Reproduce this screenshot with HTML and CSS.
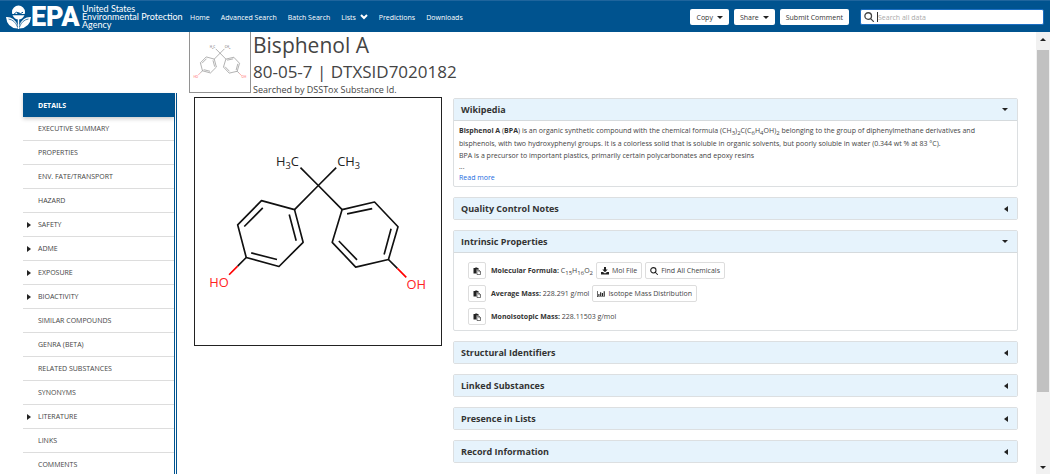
FILE: index.html
```html
<!DOCTYPE html>
<html lang="en">
<head>
<meta charset="utf-8">
<title>Bisphenol A - Chemical Details</title>
<link rel="stylesheet" href="styles.css">
</head>
<body>
<svg class="defs" aria-hidden="true">
  <symbol id="bonds" viewBox="12 7 744 744">
    <g class="bonds">
      <path d="M385 270 331 216M385 270 439 216M385 270 313 343M385 270 457 343"/>
      <path d="M313 343 213 316 141 389 167 488 266 515 339 442ZM217 338 161 394M297 358 318 437M182 474 260 494"/>
      <path d="M457 343 555 320 626 395 597 494 498 517 427 442ZM472 356 548 340M605 401 584 479M447 438 502 495"/>
      <path d="M167 488 141 514M597 494 624 521"/>
      <path class="oxygen" d="M141 514 115 540M624 521 651 548"/>
    </g>
  </symbol>
  <symbol id="copy" viewBox="0 0 16 16">
    <path d="M1 2h3l1-1h3l1 1h2v3H7v8H1z"/>
    <path d="M8 6h4l3 3v6H8z" fill="#fff" stroke="currentColor" stroke-width="1.2"/><path d="M11.5 6v3.500H15" fill="none" stroke="currentColor"/>
  </symbol>
  <symbol id="search" viewBox="0 0 16 16">
    <path d="M11 11l4 4M12 6.500a5.300 5.300 0 1 1-10.600 0a5.300 5.300 0 0 1 10.600 0z" fill="none" stroke="currentColor" stroke-width="2.100" stroke-linecap="round"/>
  </symbol>
  <symbol id="download" viewBox="0 0 16 16">
    <path d="M6 0h4v5h3.500L8 10.500 2.500 5H6zM0 10h4l4 3 4-3h4v5H0z"/>
  </symbol>
  <symbol id="chart" viewBox="0 0 18 16">
    <path d="M0 1h1.500v12.500H18V15H0zM3 8h2.500v4.500H3zM7 4h2.500v8.500H7zM11 6h2.500v6.500H11zM15 2h2.500v10.500H15z"/>
  </symbol>
</svg>

<header class="topbar">
  <a class="brand" href="#" aria-label="EPA home">
    <svg class="flower" viewBox="0 0 25 24" aria-hidden="true">
      <path d="M6 7A6.500 6.500 0 0 1 19 7Q19 8 18.700 9H14.500L12.500 7.500 10.500 9H6.300Q6 8 6 7Z" fill="#fff"/>
      <path d="M6.500 10.300H18.500Q16.500 14.500 12.500 14.500T6.500 10.300Z" fill="#fff"/>
      <path d="M8 9.200Q10.500 6 12.500 7.800T17 7.200" fill="none" stroke="#00538f" stroke-width="1"/>
      <path d="M0 12Q8 11.500 11.500 20V23.500Q1 23 0 12ZM25 12Q17 11.500 13.500 20V23.500Q24 23 25 12Z" fill="#fff"/>
      <path d="M12.500 14V24" stroke="#fff" stroke-width="1.400"/>
      <path d="M2.500 14Q9 15 11.500 22M22.500 14Q16 15 13.500 22" fill="none" stroke="#00538f" stroke-width=".7"/>
    </svg>
    <span class="epa">EPA</span>
    <span class="agency">United States<br>Environmental Protection<br>Agency</span>
  </a>
  <nav class="mainnav">
    <a href="#">Home</a>
    <a href="#">Advanced Search</a>
    <a href="#">Batch Search</a>
    <a href="#">Lists <svg class="chevron" viewBox="0 0 8 6" aria-hidden="true"><path d="M1 1l3 3 3-3"/></svg></a>
    <a href="#">Predictions</a>
    <a href="#">Downloads</a>
  </nav>
  <div class="actions">
    <button class="action" type="button">Copy <i class="caret down"></i></button>
    <button class="action" type="button">Share <i class="caret down"></i></button>
    <button class="action" type="button">Submit Comment</button>
  </div>
  <label class="searchbox">
    <svg aria-hidden="true"><use href="#search"/></svg>
    <i class="cursor"></i>
    <input type="text" placeholder="Search all data" aria-label="Search all data">
  </label>
</header>

<div class="page">
  <nav class="sidebar">
    <a class="active" href="#">DETAILS</a>
    <a href="#">EXECUTIVE SUMMARY</a>
    <a href="#">PROPERTIES</a>
    <a href="#">ENV. FATE/TRANSPORT</a>
    <a href="#">HAZARD</a>
    <a href="#"><i class="caret right"></i>SAFETY</a>
    <a href="#"><i class="caret right"></i>ADME</a>
    <a href="#"><i class="caret right"></i>EXPOSURE</a>
    <a href="#"><i class="caret right"></i>BIOACTIVITY</a>
    <a href="#">SIMILAR COMPOUNDS</a>
    <a href="#">GENRA (BETA)</a>
    <a href="#">RELATED SUBSTANCES</a>
    <a href="#">SYNONYMS</a>
    <a href="#"><i class="caret right"></i>LITERATURE</a>
    <a href="#">LINKS</a>
    <a href="#">COMMENTS</a>
  </nav>

  <main class="content">
    <div class="heading">
      <svg class="thumb" viewBox="12 7 744 744" role="img" aria-label="Bisphenol A structure">
        <use href="#bonds" x="12" y="7" width="744" height="744"/>
        <g class="atoms">
          <text x="257" y="211">H<tspan class="count" dy="10">3</tspan><tspan dy="-10">C</tspan></text>
          <text x="442" y="211">CH<tspan class="count" dy="10">3</tspan></text>
          <text class="red" x="55" y="576">HO</text>
          <text class="red" x="652" y="582">OH</text>
        </g>
      </svg>
      <div class="names">
        <h1>Bisphenol A</h1>
        <h2>80-05-7 | DTXSID7020182</h2>
        <p>Searched by DSSTox Substance Id.</p>
      </div>
    </div>
    <div class="columns">
      <svg class="structure" viewBox="12 7 744 744" role="img" aria-label="Bisphenol A structure">
        <use href="#bonds" x="12" y="7" width="744" height="744"/>
        <g class="atoms">
          <text x="257" y="211">H<tspan class="count" dy="10">3</tspan><tspan dy="-10">C</tspan></text>
          <text x="442" y="211">CH<tspan class="count" dy="10">3</tspan></text>
          <text class="red" x="55" y="576">HO</text>
          <text class="red" x="652" y="582">OH</text>
        </g>
      </svg>
      <div class="panels">
        <section class="panel">
          <button class="bar" type="button">Wikipedia <i class="caret down"></i></button>
          <div class="wiki">
            <p class="formula"><b>Bisphenol A</b> (<b>BPA</b>) is an organic synthetic compound with the chemical formula (CH<sub>3</sub>)<sub>2</sub>C(C<sub>6</sub>H<sub>4</sub>OH)<sub>2</sub> belonging to the group of diphenylmethane derivatives and bisphenols, with two hydroxyphenyl groups. It is a colorless solid that is soluble in organic solvents, but poorly soluble in water (0.344 wt % at 83 °C).</p>
            <p>BPA is a precursor to important plastics, primarily certain polycarbonates and epoxy resins</p>
            <p>...</p>
            <a href="#">Read more</a>
          </div>
        </section>
        <section class="panel">
          <button class="bar" type="button">Quality Control Notes <i class="caret left"></i></button>
        </section>
        <section class="panel">
          <button class="bar" type="button">Intrinsic Properties <i class="caret down"></i></button>
          <div class="props">
            <div class="prop">
              <button class="tool" type="button" aria-label="Copy molecular formula"><svg><use href="#copy"/></svg></button>
              <span class="value"><b>Molecular Formula:</b> C<sub>15</sub>H<sub>16</sub>O<sub>2</sub></span>
              <button class="tool" type="button"><svg><use href="#download"/></svg>Mol File</button>
              <button class="tool" type="button"><svg><use href="#search"/></svg>Find All Chemicals</button>
            </div>
            <div class="prop">
              <button class="tool" type="button" aria-label="Copy average mass"><svg><use href="#copy"/></svg></button>
              <span class="value"><b>Average Mass:</b> 228.291 g/mol</span>
              <button class="tool" type="button"><svg><use href="#chart"/></svg>Isotope Mass Distribution</button>
            </div>
            <div class="prop">
              <button class="tool" type="button" aria-label="Copy monoisotopic mass"><svg><use href="#copy"/></svg></button>
              <span class="value"><b>Monoisotopic Mass:</b> 228.11503 g/mol</span>
            </div>
          </div>
        </section>
        <section class="panel">
          <button class="bar" type="button">Structural Identifiers <i class="caret left"></i></button>
        </section>
        <section class="panel">
          <button class="bar" type="button">Linked Substances <i class="caret left"></i></button>
        </section>
        <section class="panel">
          <button class="bar" type="button">Presence in Lists <i class="caret left"></i></button>
        </section>
        <section class="panel">
          <button class="bar" type="button">Record Information <i class="caret left"></i></button>
        </section>
      </div>
    </div>
  </main>

  <div class="scrollbar" aria-hidden="true">
    <i class="caret up"></i>
    <div class="track"><div class="handle"></div></div>
    <i class="caret down"></i>
  </div>
</div>
</body>
</html>
```
FILE: styles.css
```css
* { box-sizing: border-box; }
body {
  margin: 0;
  height: 100vh;
  display: flex;
  flex-direction: column;
  overflow: hidden;
  background: #fff;
  color: #444;
  font: 7px/11px "Open Sans", "Noto Sans", sans-serif;
}
h1, h2, p { margin: 0; font-weight: 400; }
a { color: inherit; text-decoration: none; }
button, input { font: inherit; color: inherit; margin: 0; }
button { cursor: pointer; }
b { font-weight: 700; color: #333; }
sub { font-size: 6px; line-height: 0; }
.defs { position: absolute; width: 0; height: 0; }

.caret { display: block; flex: none; width: 0; height: 0; border: 3px solid transparent; color: #222; }
.caret.down { border-top-color: currentColor; border-bottom: 0; }
.caret.up { border-bottom-color: currentColor; border-top: 0; }
.caret.left { border-right: 4px solid currentColor; border-left: 0; }
.caret.right { border-left: 4px solid currentColor; border-right: 0; }

.topbar {
  flex: none;
  display: flex;
  align-items: center;
  height: 32px;
  padding: 1px 6px 0;
  background: #00538f;
  border-top: 1px solid #1f659d;
  color: #fff;
}
.brand { flex: none; display: flex; align-items: center; width: 184px; }
.flower { flex: none; width: 25px; height: 24px; }
.epa { flex: none; width: 51px; font: 900 27px/24px Roboto, "Liberation Sans", sans-serif; }
.agency { font: 9px/8px Lato, "Liberation Sans", sans-serif; white-space: nowrap; }
.mainnav { display: flex; gap: 11px; white-space: nowrap; }
.chevron { width: 8px; height: 6px; margin-left: 2px; fill: none; stroke: #fff; stroke-width: 2; }
.actions { display: flex; gap: 5px; margin-left: auto; }
.action {
  display: flex;
  align-items: center;
  gap: 4px;
  height: 16px;
  padding: 0 6px;
  border: 0;
  border-radius: 2px;
  background: #fff;
  color: #333;
  white-space: nowrap;
}
.searchbox {
  display: flex;
  align-items: center;
  width: 184px;
  height: 16px;
  margin-left: 11px;
  padding: 0 3px;
  background: #fff;
  border: 1px solid #1b6ec2;
  border-radius: 2px;
  color: #444;
}
.searchbox svg { width: 10px; height: 10px; margin-right: 3px; }
.cursor { width: 1px; height: 10px; background: #333; }
.searchbox input { flex: 1; min-width: 0; padding: 0; border: 0; outline: 0; background: none; }
.searchbox input::placeholder { color: #aaa; }

.page { flex: 1; min-height: 0; display: flex; }
.sidebar {
  flex: none;
  width: 154px;
  margin: 61px 0 0 23px;
  border-right: 3px double #00538f;
}
.sidebar a {
  display: flex;
  align-items: center;
  height: 24px;
  padding-left: 15px;
  border-bottom: 1px solid #ddd;
}
.sidebar .active {
  background: #00538f;
  border: 0;
  color: #fff;
  font-weight: 700;
  box-shadow: 0 2px 4px #0003;
}
.sidebar .caret { margin: 0 7px 0 -11px; }

.content { flex: 1; min-width: 0; padding: 0 18px 0 12px; }
.heading { display: flex; gap: 2px; height: 61px; }
.thumb { width: 62px; height: 61px; border: 1px solid #777; border-top: 0; opacity: .8; }
.names h1 { font-size: 21px; line-height: 27px; }
.names h2 { font-size: 17px; line-height: 26px; }
.names p { font-size: 9px; line-height: 9px; }
.columns { display: flex; align-items: flex-start; gap: 11px; padding: 4px 0 0 5px; }
.structure { flex: none; width: 248px; height: 249px; border: 1px solid #222; }
.bonds path { fill: none; stroke: #111; stroke-width: 5; stroke-linejoin: round; }
.bonds .oxygen { stroke: #f00; }
.atoms text { font: 39px "Open Sans", sans-serif; fill: #222; }
.atoms .count { font-size: 28px; }
.atoms .red { fill: #f22; }

.panels { flex: 1; min-width: 0; display: flex; flex-direction: column; gap: 10px; padding-top: 1px; }
.panel { border: 1px solid #dcdfe1; border-radius: 2px; }
.bar {
  display: flex;
  align-items: center;
  justify-content: space-between;
  width: 100%;
  height: 21px;
  padding: 0 9px 0 7px;
  border: 0;
  background: #e6f3fc;
  color: #333;
  font-size: 9px;
  font-weight: 700;
}
.wiki { padding: 3px 32px 3px 5px; border-top: 1px solid #d5dadd; }
.wiki .formula { line-height: 13px; }
.wiki a { display: block; color: #1a6be0; }
.props { display: flex; flex-direction: column; gap: 6px; padding: 9px 14px 5px; border-top: 1px solid #d5dadd; }
.prop { display: flex; align-items: center; gap: 3px; white-space: nowrap; }
.value { padding-left: 2px; }
.tool {
  display: flex;
  align-items: center;
  gap: 3px;
  height: 17px;
  padding: 0 4px;
  border: 1px solid #ddd;
  border-radius: 2px;
  background: #fff;
}
.tool svg { width: 8px; height: 8px; fill: #222; color: #222; }

.scrollbar {
  flex: none;
  display: flex;
  flex-direction: column;
  align-items: center;
  width: 14px;
  padding: 6px 0 5px;
  background: #f1f1f1;
}
.track { flex: 1; align-self: stretch; margin: 9px 1px; }
.handle { height: 84%; background: #c1c1c1; }
```
